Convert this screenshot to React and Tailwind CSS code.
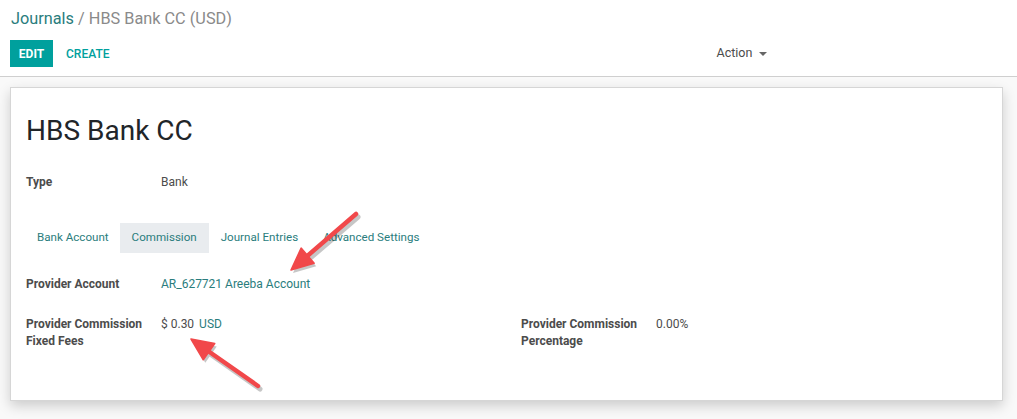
import React from "react";

function Arrow({ x1, y1, x2, y2 }) {
  const dx = x2 - x1, dy = y2 - y1;
  const len = Math.hypot(dx, dy);
  const ux = dx / len, uy = dy / len;
  const hl = 22, hw = 10;
  const bx = x2 - ux * hl, by = y2 - uy * hl;
  const px = -uy, py = ux;
  const pts = `${x2},${y2} ${bx + px * hw},${by + py * hw} ${bx - px * hw},${by - py * hw}`;
  return (
    <g>
      <g transform="translate(2,3)" opacity="0.22">
        <line x1={x1} y1={y1} x2={bx + ux * 2} y2={by + uy * 2} stroke="#000" strokeWidth="5" strokeLinecap="round" />
        <polygon points={pts} fill="#000" />
      </g>
      <line x1={x1} y1={y1} x2={bx + ux * 2} y2={by + uy * 2} stroke="#f1484a" strokeWidth="4.5" strokeLinecap="round" />
      <polygon points={pts} fill="#f1484a" strokeLinejoin="round" stroke="#f1484a" strokeWidth="1.5" />
    </g>
  );
}

export default function App() {
  const font = { fontFamily: "Roboto, 'Noto Sans', sans-serif" };
  return (
    <div className="relative w-[1017px] h-[419px] bg-[#f9f9f9] overflow-hidden" style={font}>
      <div className="h-[77px] bg-white border-b border-[#cfcfcf] px-[10px] pt-[9px]">
        <div className="text-[16.3px] leading-[20px] h-[20px] pl-[1px]">
          <span className="text-[#2a7d7d]">Journals</span>
          <span className="text-[#8a8a8a]"> / HBS Bank CC (USD)</span>
        </div>
        <div className="flex items-center mt-[11px]">
          <button className="h-[27px] w-[43px] bg-[#00a09d] text-white text-[12px] font-bold">EDIT</button>
          <button className="ml-[4px] px-[9px] h-[27px] text-[#00a09d] text-[12px] font-medium">CREATE</button>
          <div className="ml-[598px] flex items-center text-[#4c4c4c] text-[12.5px]">
            Action
            <span className="ml-[7px] w-0 h-0 border-l-[4px] border-r-[4px] border-t-[4px] border-l-transparent border-r-transparent border-t-[#666]" />
          </div>
        </div>
      </div>
      <div className="mt-[10px] ml-[10px] w-[993px] h-[314px] bg-white border border-[#d6d6d6] shadow-[0_5px_12px_rgba(0,0,0,0.18)] px-[15px] pt-[27px]">
        <h1 className="text-[28px] leading-[32px] text-[#212529]">HBS Bank CC</h1>
        <div className="flex mt-[27px] text-[12px] leading-[16px]">
          <div className="w-[135px] font-bold text-[#4c4c4c]">Type</div>
          <div className="text-[#4c4c4c]">Bank</div>
        </div>
        <div className="flex mt-[33px] ml-[0px] text-[11.6px] text-[#2a7d7d]">
          <div className="px-[11px] h-[30px] flex items-center">Bank Account</div>
          <div className="px-[12px] h-[30px] flex items-center bg-[#e9ecef]">Commission</div>
          <div className="px-[12px] h-[30px] flex items-center">Journal Entries</div>
          <div className="px-[13px] h-[30px] flex items-center">Advanced Settings</div>
        </div>
        <div className="flex mt-[23px] text-[12px] leading-[16px]">
          <div className="w-[135px] font-bold text-[#4c4c4c]">Provider Account</div>
          <div className="text-[#2a7d7d]">AR_627721 Areeba Account</div>
        </div>
        <div className="flex mt-[24px] text-[12px] leading-[17px]">
          <div className="w-[495px] flex">
            <div className="w-[135px] font-bold text-[#4c4c4c]">Provider Commission<br />Fixed Fees</div>
            <div className="text-[#4c4c4c]">$ 0.30 <span className="ml-[2px] text-[#2a7d7d]">USD</span></div>
          </div>
          <div className="flex">
            <div className="w-[135px] font-bold text-[#4c4c4c]">Provider Commission<br />Percentage</div>
            <div className="text-[#4c4c4c]">0.00%</div>
          </div>
        </div>
      </div>
      <svg className="absolute left-0 top-0 pointer-events-none" width="1017" height="419">
        <Arrow x1={356} y1={214} x2={291} y2={270} />
        <Arrow x1={258} y1={386} x2={191} y2={339} />
      </svg>
    </div>
  );
}
